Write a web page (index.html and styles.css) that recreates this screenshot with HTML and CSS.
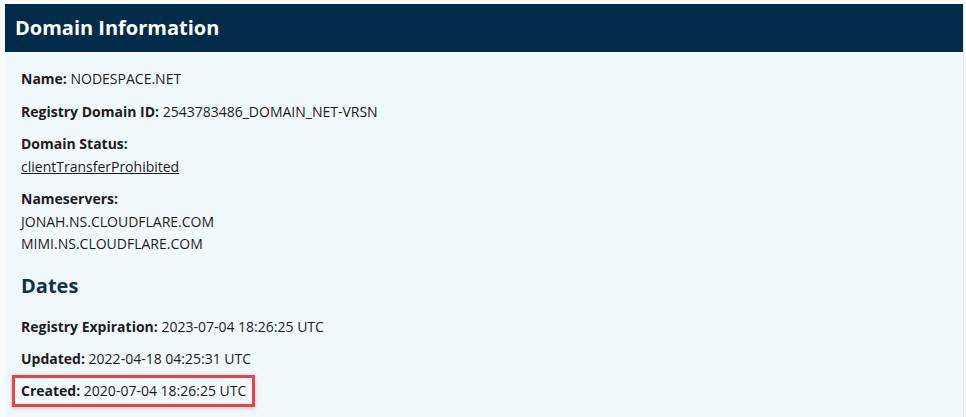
FILE: index.html
```html
<!DOCTYPE html>
<html lang="en">
<head>
    <meta charset="UTF-8">
    <title>Domain Information</title>
    <link rel="stylesheet" href="styles.css">
</head>
<body>

<div class="panel">
    <div class="panel-header">Domain Information</div>
    <div class="panel-body">
        <p><b>Name:</b> NODESPACE.NET</p>
        <p><b>Registry Domain ID:</b> 2543783486_DOMAIN_NET-VRSN</p>
        <p><b>Domain Status:</b><br><a href="#">clientTransferProhibited</a></p>
        <p><b>Nameservers:</b><br>JONAH.NS.CLOUDFLARE.COM<br>MIMI.NS.CLOUDFLARE.COM</p>

        <h2>Dates</h2>
        <p><b>Registry Expiration:</b> 2023-07-04 18:26:25 UTC</p>
        <p><b>Updated:</b> 2022-04-18 04:25:31 UTC</p>
        <p class="highlight"><b>Created:</b> 2020-07-04 18:26:25 UTC</p>
    </div>
</div>

</body>
</html>
```

FILE: styles.css
```css
body {
    margin: 0;
    padding: 4px 2px 0 5px;
    background-color: #fafbfc;
    font-family: "Open Sans", "Noto Sans", sans-serif;
    color: #1b1b1b;
    font-size: 14px;
}
.panel {
    background-color: #f2f9fd;
    border-right: 1px solid #e3e6e9;
    min-height: 413px;
}
.panel-header {
    background-color: #002b49;
    color: white;
    font-weight: bold;
    font-size: 20px;
    height: 48px;
    line-height: 48px;
    padding-left: 10px;
}
.panel-body {
    padding: 16px 16px 0 16px;
}
p {
    margin: 0 0 10px 0;
    line-height: 22.5px;
}
a {
    color: #1b1b1b;
}
h2 {
    margin: 17px 0 17px 0;
    font-size: 20px;
    line-height: 26px;
    color: #13314d;
}
.highlight {
    display: inline-block;
    margin: -7px 0 0 -9px;
    padding: 2px 6px 2px 6px;
    border: 3px solid #ec4146;
    box-shadow: 0 1px 4px rgba(0, 0, 0, 0.25);
}
```
